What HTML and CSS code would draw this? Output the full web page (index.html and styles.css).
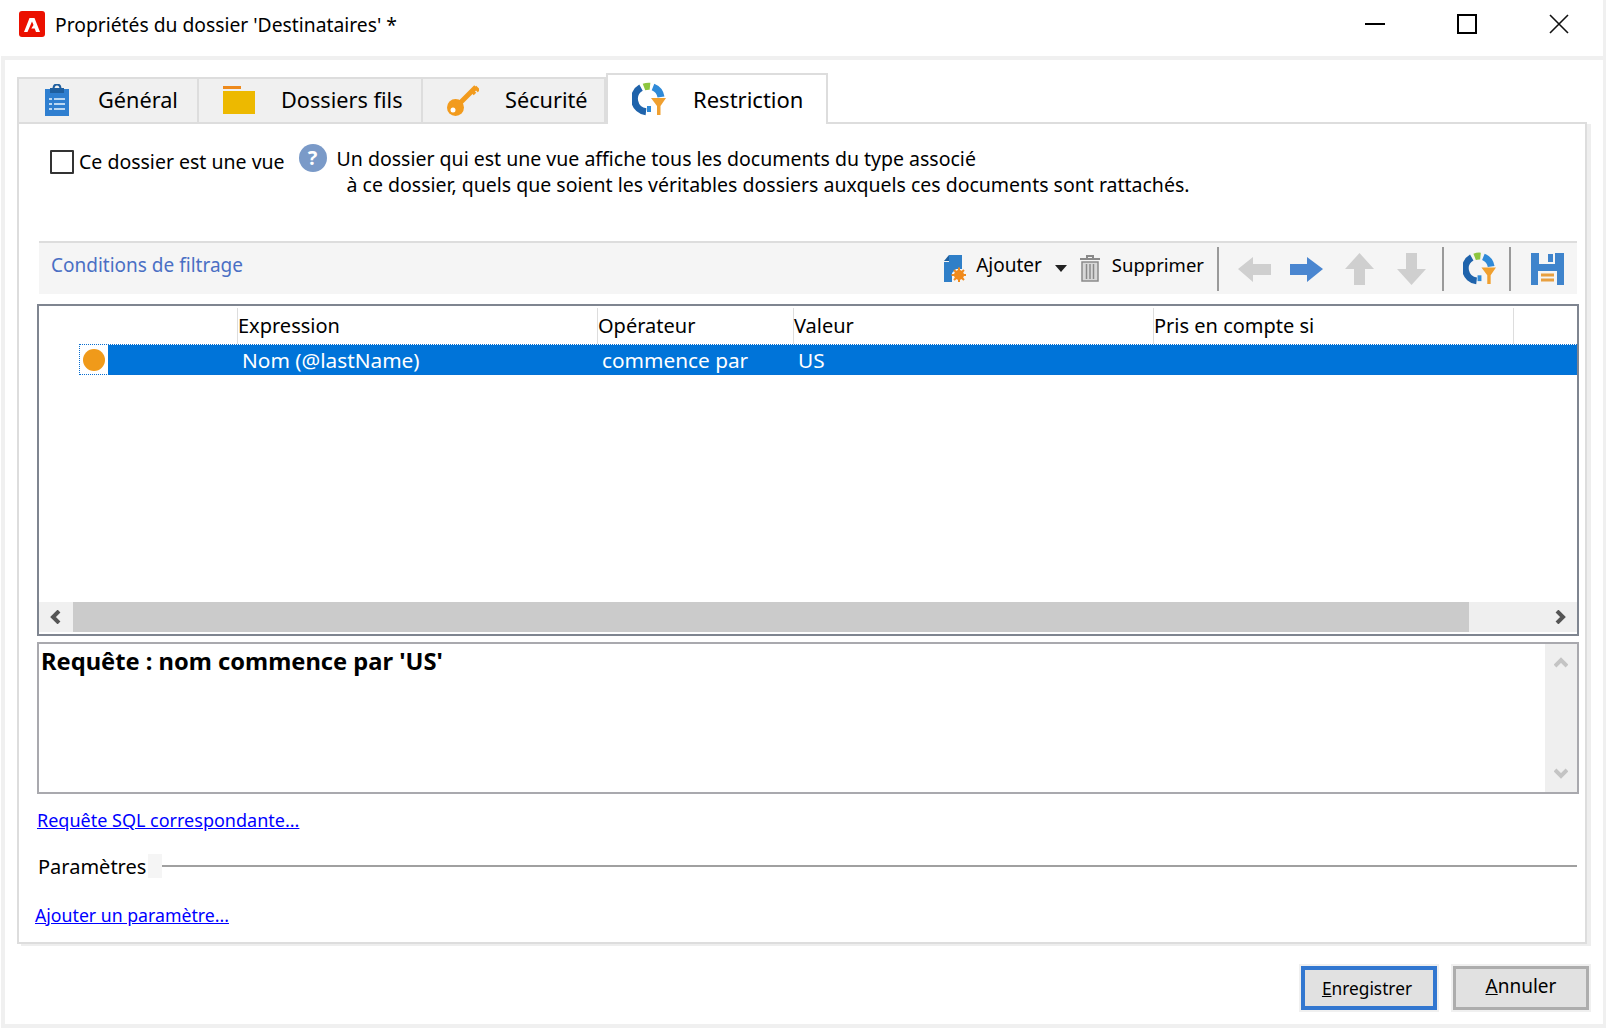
FILE: index.html
```html
<!DOCTYPE html>
<html lang="fr">

<head>
	<title>Propriétés du dossier</title>
	<link rel="stylesheet" href="styles.css">
</head>

<body>
	<svg class="defs" width="0" height="0">
		<symbol id="restrict" viewBox="0 0 34 34">
			<path d="M9 5.600A13 13 0 0 0 14 29.800" fill="none" stroke="#1f63ab" stroke-width="7" />
			<path d="M12 5A13 13 0 0 1 18 4.200" fill="none" stroke="#8dc63f" stroke-width="7" />
			<path d="M21 5A13 13 0 0 1 29 15" fill="none" stroke="#2f8ad8" stroke-width="7" />
			<path d="M17 30V24" fill="none" stroke="#2f8ad8" stroke-width="4" />
			<path d="M19 16H34L28.500 24V33H25V24Z" fill="#f0a030" />
		</symbol>
	</svg>

	<div class="window">
		<header class="titlebar">
			<svg class="applogo" width="26" height="26" viewBox="0 0 26 26">
				<rect width="26" height="26" rx="3" fill="#eb1000" />
				<path d="M10.500 7H15.500L21 21H17L15.700 17.500H12.300L14.500 14L13 10.500L8.500 21H5Z" fill="#fff" />
			</svg>
			<span class="title">Propriétés du dossier 'Destinataires' *</span>
			<div class="winbtns">
				<svg width="20" height="20" viewBox="0 0 20 20"><path d="M0 10H20" stroke="#000" stroke-width="2" /></svg>
				<svg width="20" height="20" viewBox="0 0 20 20"><rect x="1" y="1" width="18" height="18" fill="none" stroke="#000" stroke-width="2" /></svg>
				<svg width="20" height="20" viewBox="0 0 20 20"><path d="M1 1L19 19M19 1L1 19" stroke="#111" stroke-width="1.600" /></svg>
			</div>
		</header>

		<div class="frame">
			<div class="tabs">
				<div class="tab tab-general">
					<svg width="24" height="32" viewBox="0 0 24 32">
						<rect y="5" width="24" height="27" fill="#2f7fd0" />
						<rect x="5" y="4" width="14" height="5" fill="#1f5f9f" />
						<path d="M8.500 5C8.500 -1 15.500 -1 15.500 5" fill="none" stroke="#1f5f9f" stroke-width="2" />
						<path d="M4 15H7M9 15H20M4 20H7M9 20H20M4 25H7M9 25H20" stroke="#bcd8f2" stroke-width="2" />
					</svg>
					<span>Général</span>
				</div>
				<div class="tab tab-folders">
					<svg width="32" height="28" viewBox="0 0 32 28">
						<rect width="18" height="3" fill="#ee8a1c" />
						<rect y="5" width="32" height="23" fill="#edb900" />
					</svg>
					<span>Dossiers fils</span>
				</div>
				<div class="tab tab-security">
					<svg width="32" height="32" viewBox="0 0 32 32">
						<path d="M12 20L29 3" stroke="#f29b1d" stroke-width="5" />
						<path d="M24 6L28 10M28 3L32 7" stroke="#f29b1d" stroke-width="3.500" />
						<circle cx="8.500" cy="23.500" r="8.500" fill="#f29b1d" />
						<circle cx="6" cy="26" r="2.500" fill="#fff" />
					</svg>
					<span>Sécurité</span>
				</div>
				<div class="tab tab-active">
					<svg width="34" height="34"><use href="#restrict" /></svg>
					<span>Restriction</span>
				</div>
			</div>

			<main class="panel">
				<div class="viewrow">
					<label class="viewcheck"><span class="checkbox"></span>Ce dossier est une vue</label>
					<span class="help">?</span>
					<p class="viewinfo">Un dossier qui est une vue affiche tous les documents du type associé<br>
						<span class="indent">à ce dossier, quels que soient les véritables dossiers auxquels ces documents sont rattachés.</span></p>
				</div>

				<div class="toolbar">
					<span class="toolbar-title">Conditions de filtrage</span>
					<svg class="ic-add" width="22" height="27" viewBox="0 0 22 27">
						<path d="M5 0H18V14H12L8 18V27H0V7H5Z" fill="#2f7fc8" />
						<path d="M0 6L5 0V6Z" fill="#1d5f9f" />
						<circle cx="15" cy="20" r="5" fill="#f08a1c" />
						<path d="M15 12.500V27.500M7.500 20H22.500M10 15L20 25M20 15L10 25" stroke="#f08a1c" stroke-width="2" />
					</svg>
					<span class="tool-label ajouter">Ajouter</span>
					<span class="caret"></span>
					<svg class="ic-trash" width="24" height="27" viewBox="0 0 22 27">
						<path d="M8 3V1H14V3M1 4H21" fill="none" stroke="#8a8a8a" stroke-width="2" />
						<path d="M3 7H19V26H3Z" fill="#d8d8d8" stroke="#8a8a8a" stroke-width="1.500" />
						<path d="M7.500 9V24M11 9V24M14.500 9V24" stroke="#8a8a8a" stroke-width="1.500" />
					</svg>
					<span class="tool-label supprimer">Supprimer</span>
					<span class="sep sep-a"></span>
					<svg class="ic-arrow ic-left" width="33" height="30" viewBox="0 0 33 30"><path d="M0 15L15 3V10H33V21H15V28Z" fill="#cfcfcf" /></svg>
					<svg class="ic-arrow ic-right" width="33" height="30" viewBox="0 0 33 30"><path d="M33 15L17 3V10H0V21H17V28Z" fill="#4a86d0" /></svg>
					<svg class="ic-arrow ic-up" width="29" height="32" viewBox="0 0 29 32"><path d="M14.500 0L29 16H20V32H9V16H0Z" fill="#cfcfcf" /></svg>
					<svg class="ic-arrow ic-down" width="29" height="32" viewBox="0 0 29 32"><path d="M14.500 32L29 16H20V0H9V16H0Z" fill="#cfcfcf" /></svg>
					<span class="sep sep-b"></span>
					<svg class="ic-filter" width="33" height="33"><use href="#restrict" /></svg>
					<span class="sep sep-c"></span>
					<svg class="ic-save" width="33" height="33" viewBox="0 0 33 33">
						<path d="M0 1H33V33H0Z" fill="#3f84cc" />
						<rect x="8" y="1" width="16" height="11" fill="#f5f5f5" />
						<rect x="17" y="2" width="5" height="8" fill="#3f84cc" />
						<rect x="7" y="19" width="19" height="14" fill="#f5f5f5" />
						<path d="M10 23H23M10 28H23" stroke="#e8a040" stroke-width="3" />
					</svg>
				</div>

				<div class="grid">
					<div class="grid-head">
						<div class="col col-icon"></div>
						<div class="col col-expr">Expression</div>
						<div class="col col-op">Opérateur</div>
						<div class="col col-val">Valeur</div>
						<div class="col col-cond">Pris en compte si</div>
					</div>
					<div class="grid-row">
						<div class="row-mark"><span class="dot"></span></div>
						<div class="row-sel">
							<span class="cell cell-expr">Nom (@lastName)</span>
							<span class="cell cell-op">commence par</span>
							<span class="cell cell-val">US</span>
						</div>
					</div>
					<div class="grid-space"></div>
					<div class="hscroll">
						<span class="sb-btn">
							<svg width="14" height="14" viewBox="0 0 14 14"><path d="M10 1L4 7L10 13" fill="none" stroke="#555" stroke-width="4" /></svg>
						</span>
						<span class="sb-thumb"></span>
						<span class="sb-track">
							<svg width="14" height="14" viewBox="0 0 14 14"><path d="M4 1L10 7L4 13" fill="none" stroke="#555" stroke-width="4" /></svg>
						</span>
					</div>
				</div>

				<div class="query">
					<div class="query-text">Requête : nom commence par 'US'</div>
					<div class="vscroll">
						<svg width="14" height="14" viewBox="0 0 14 14"><path d="M1 11L7 5L13 11" fill="none" stroke="#c4c4c4" stroke-width="4" /></svg>
						<svg width="14" height="14" viewBox="0 0 14 14"><path d="M1 3L7 9L13 3" fill="none" stroke="#c4c4c4" stroke-width="4" /></svg>
					</div>
				</div>

				<a class="link link-sql" href="#">Requête SQL correspondante...</a>

				<div class="params">
					<span class="params-label">Paramètres</span>
					<span class="params-gap"></span>
					<span class="params-line"></span>
				</div>

				<a class="link link-add" href="#">Ajouter un paramètre...</a>
			</main>

			<footer class="buttons">
				<button class="btn btn-default"><u>E</u>nregistrer</button>
				<button class="btn btn-cancel"><u>A</u>nnuler</button>
			</footer>
		</div>
	</div>
</body>

</html>
```

FILE: styles.css
```css
* {
	box-sizing: border-box;
}

html,
body {
	margin: 0;
	background: #fff;
}

body {
	font-family: "Noto Sans", "Open Sans", sans-serif;
	font-size: 20px;
	color: #000;
	overflow: hidden;
}

.defs {
	display: block;
	height: 0;
}

.window {
	width: 1606px;
	height: 1028px;
	display: flex;
	flex-direction: column;
	border-right: 3px solid #f0f0f0;
}

.titlebar {
	height: 56px;
	flex: none;
	display: flex;
	align-items: center;
	padding: 0 34px 8px 19px;
}

.applogo {
	margin-right: 10px;
}

.title {
	font-size: 19.300px;
}

.winbtns {
	margin-left: auto;
	display: flex;
	gap: 72px;
}

.frame {
	flex: 1;
	min-height: 0;
	margin-left: 1px;
	border: solid #f0f0f0;
	border-width: 4px 0 4px 4px;
	padding: 13px 0 0 12px;
	display: flex;
	flex-direction: column;
}

.tabs {
	display: flex;
	align-items: flex-end;
	height: 51px;
	margin-bottom: -2px;
	position: relative;
	z-index: 1;
}

.tab {
	height: 47px;
	display: flex;
	align-items: center;
	background: #f0f0f0;
	border: 2px solid #ddd;
	border-left-width: 0;
	font-size: 21.700px;
	padding-bottom: 2px;
}

.tab-general {
	width: 182px;
	border-left-width: 2px;
	padding-left: 26px;
}

.tab-general span {
	margin-left: 29px;
}

.tab-folders {
	width: 224px;
	padding-left: 24px;
}

.tab-folders span {
	margin-left: 26px;
}

.tab-security {
	width: 183px;
	padding-left: 24px;
}

.tab-security span {
	margin-left: 26px;
}

.tab-active {
	width: 222px;
	height: 51px;
	background: #fff;
	border-left-width: 2px;
	border-bottom: 0;
	padding-left: 24px;
	font-size: 22px;
}

.tab-active span {
	margin-left: 27px;
}

.panel {
	width: 1570px;
	height: 822px;
	flex: none;
	border: 2px solid #ddd;
	box-shadow: 4px 2px 0 #eee;
	display: flex;
	flex-direction: column;
	align-items: flex-start;
}

.viewrow {
	height: 117px;
	flex: none;
	display: flex;
	align-items: flex-start;
	padding-left: 31px;
}

.viewcheck {
	display: flex;
	align-items: center;
	margin-top: 24px;
	font-size: 19.500px;
	line-height: 28px;
}

.checkbox {
	width: 24px;
	height: 24px;
	border: 2px solid #333;
	border-radius: 1px;
	margin-right: 5px;
	background: #fff;
}

.help {
	width: 28px;
	height: 28px;
	margin: 20px 0 0 14px;
	border-radius: 50%;
	background: #7a9ac8;
	color: #fff;
	font-weight: 700;
	font-size: 20px;
	line-height: 28px;
	text-align: center;
}

.viewinfo {
	margin: 22px 0 0 10px;
	font-size: 19.500px;
	line-height: 26px;
}

.indent {
	margin-left: 10px;
}

.toolbar {
	width: 1538px;
	height: 53px;
	flex: none;
	margin-left: 20px;
	background: #f5f5f5;
	border-top: 2px solid #ddd;
	display: flex;
	align-items: center;
	padding-left: 12px;
}

.toolbar-title {
	color: #4a6fc4;
	font-size: 19px;
	margin: 0 auto 8px 0;
}

.tool-label {
	font-size: 19px;
	margin-bottom: 8px;
}

.supprimer {
	font-size: 18.500px;
}

.ajouter {
	margin-left: 10px;
}

.caret {
	width: 0;
	height: 0;
	margin: 0 11px 0 13px;
	border: solid transparent;
	border-width: 7px 6px 0;
	border-top-color: #222;
}

.ic-trash {
	margin-right: 10px;
}

.sep {
	width: 2px;
	height: 44px;
	background: #9a9a9a;
}

.sep-a {
	margin: 0 19px 0 13px;
}

.ic-right {
	margin-left: 19px;
}

.ic-up {
	margin-left: 22px;
}

.ic-down {
	margin-left: 23px;
}

.sep-b {
	margin: 0 19px 0 16px;
}

.sep-c {
	margin: 0 20px 0 13px;
}

.ic-save {
	margin-right: 13px;
}

.grid {
	width: 1542px;
	height: 332px;
	flex: none;
	margin: 10px 0 0 18px;
	border: 2px solid #7f8590;
	display: flex;
	flex-direction: column;
}

.grid-head {
	height: 38px;
	flex: none;
	display: flex;
	font-size: 20px;
	line-height: 36px;
	padding-top: 2px;
}

.col {
	border-right: 1px solid #ddd;
}

.col-icon {
	width: 199px;
}

.col-expr {
	width: 360px;
}

.col-op {
	width: 196px;
}

.col-val {
	width: 360px;
}

.col-cond {
	width: 360px;
}

.grid-row {
	height: 31px;
	flex: none;
	display: flex;
	margin-left: 40px;
	border-top: 1px dotted #fff;
	outline: 1px dotted #0a6fd0;
	outline-offset: -1px;
}

.row-mark {
	width: 29px;
	display: flex;
	align-items: center;
	justify-content: center;
}

.dot {
	width: 22px;
	height: 22px;
	border-radius: 50%;
	background: #f09a1a;
}

.row-sel {
	flex: 1;
	background: #0074d9;
	color: #fff;
	display: flex;
	align-items: center;
	font-size: 20.800px;
}

.cell {
	display: block;
}

.cell-expr {
	width: 360px;
	margin-left: 134px;
}

.cell-op {
	width: 196px;
}

.grid-space {
	flex: 1;
}

.hscroll {
	height: 30px;
	flex: none;
	display: flex;
	margin-bottom: 2px;
}

.sb-btn {
	width: 34px;
	background: #f0f0f0;
	display: flex;
	align-items: center;
	justify-content: center;
}

.sb-thumb {
	width: 1396px;
	background: #cbcbcb;
}

.sb-track {
	flex: 1;
	background: #efefef;
	display: flex;
	align-items: center;
	justify-content: flex-end;
	padding-right: 10px;
}

.query {
	width: 1542px;
	height: 152px;
	flex: none;
	margin: 6px 0 0 18px;
	border: 2px solid #a9a9ae;
	display: flex;
	justify-content: space-between;
}

.query-text {
	font-size: 23.700px;
	font-weight: 700;
	line-height: 30px;
	padding: 2px 0 0 2px;
}

.vscroll {
	width: 32px;
	background: #efefef;
	display: flex;
	flex-direction: column;
	justify-content: space-between;
	align-items: center;
	padding: 11px 0;
}

.link {
	color: #00f;
	line-height: 26px;
}

.link-sql {
	font-size: 18px;
	margin: 13px 0 0 18px;
}

.params {
	width: 1539px;
	height: 24px;
	flex: none;
	margin: 21px 0 0 19px;
	display: flex;
	align-items: center;
}

.params-label {
	font-size: 20px;
}

.params-gap {
	width: 14px;
	height: 24px;
	margin-left: 2px;
	background: #f5f5f5;
}

.params-line {
	flex: 1;
	height: 2px;
	background: #a0a0a0;
}

.link-add {
	font-size: 17.700px;
	margin: 24px 0 0 16px;
}

.buttons {
	flex: none;
	display: flex;
	margin: 22px 0 0 1284px;
	gap: 16px;
}

.btn {
	width: 136px;
	height: 44px;
	background: #e1e1e1;
	font-family: inherit;
	font-size: 19px;
	color: #000;
	padding: 0;
	box-shadow: 0 0 0 2px #f0f0f0;
}

.btn-default {
	font-size: 17.300px;
	border: 4px solid #3277d0;
	padding-right: 4px;
}

.btn-cancel {
	border: 3px solid #adadad;
	padding-bottom: 5px;
}
```
